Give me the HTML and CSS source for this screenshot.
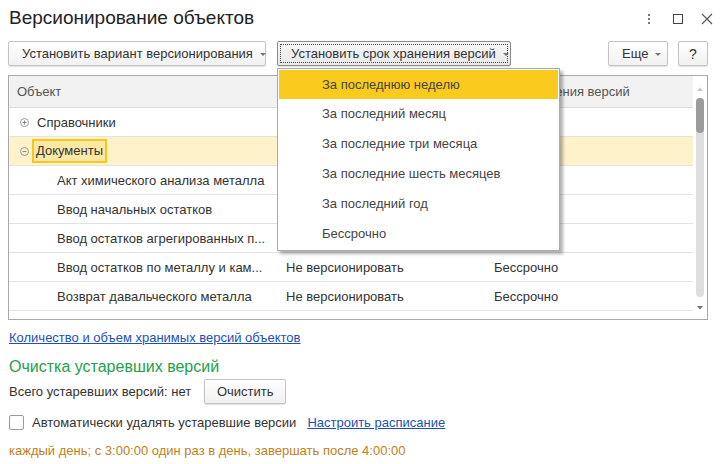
FILE: index.html
```html
<!DOCTYPE html>
<html lang="ru">
<head>
<meta charset="utf-8">
<title>Версионирование объектов</title>
<link rel="stylesheet" href="styles.css">
</head>
<body>
<div class="window">
  <header class="titlebar">
    <h1 class="title">Версионирование объектов</h1>
    <div class="wincontrols">
      <svg class="wc" width="12" height="12" viewBox="0 0 12 12"><g fill="#777"><rect x="5" y="1" width="2" height="2"/><rect x="5" y="5" width="2" height="2"/><rect x="5" y="9" width="2" height="2"/></g></svg>
      <svg class="wc" width="12" height="12" viewBox="0 0 12 12"><rect x="1.5" y="1.5" width="9" height="9" fill="none" stroke="#444" stroke-width="1"/></svg>
      <svg class="wc" width="12" height="12" viewBox="0 0 12 12"><path d="M1 1L11 11M11 1L1 11" stroke="#555" stroke-width="1.1"/></svg>
    </div>
  </header>

  <div class="toolbar">
    <button class="btn btn-wide">Установить вариант версионирования <span class="caret"></span></button>
    <button class="btn btn-active"><span class="focus">Установить срок хранения версий <span class="caret"></span></span></button>
    <div class="spacer"></div>
    <button class="btn btn-more">Еще <span class="caret"></span></button>
    <button class="btn btn-help">?</button>
  </div>

  <div class="grid-box">
    <div class="grid">
      <div class="row head">
        <div class="c1">Объект</div>
        <div class="c2"></div>
        <div class="c3">Срок хранения версий</div>
      </div>
      <div class="row">
        <div class="c1 tree"><svg class="node" width="9" height="9" viewBox="0 0 9 9"><circle cx="4.5" cy="4.5" r="4" fill="none" stroke="#999"/><path d="M2.5 4.5h4M4.5 2.5v4" stroke="#888"/></svg>Справочники</div>
        <div class="c2"></div>
        <div class="c3"></div>
      </div>
      <div class="row selected">
        <div class="c1 tree"><svg class="node" width="9" height="9" viewBox="0 0 9 9"><circle cx="4.5" cy="4.5" r="4" fill="none" stroke="#999"/><path d="M2.5 4.5h4" stroke="#888"/></svg><span class="cur">Документы</span></div>
        <div class="c2"></div>
        <div class="c3"></div>
      </div>
      <div class="row">
        <div class="c1 child">Акт химического анализа металла</div>
        <div class="c2"></div>
        <div class="c3"></div>
      </div>
      <div class="row">
        <div class="c1 child">Ввод начальных остатков</div>
        <div class="c2"></div>
        <div class="c3"></div>
      </div>
      <div class="row">
        <div class="c1 child">Ввод остатков агрегированных п...</div>
        <div class="c2"></div>
        <div class="c3"></div>
      </div>
      <div class="row">
        <div class="c1 child">Ввод остатков по металлу и кам...</div>
        <div class="c2">Не версионировать</div>
        <div class="c3">Бессрочно</div>
      </div>
      <div class="row">
        <div class="c1 child">Возврат давальческого металла</div>
        <div class="c2">Не версионировать</div>
        <div class="c3">Бессрочно</div>
      </div>
    </div>
    <div class="scrollbar">
      <svg width="8" height="6" viewBox="0 0 8 6"><path d="M1 5L4 1.5L7 5Z" fill="#c8c8c8"/></svg>
      <div class="track"><div class="thumb"></div></div>
      <svg width="8" height="6" viewBox="0 0 8 6"><path d="M1 1L4 4.5L7 1Z" fill="#777"/></svg>
    </div>
  </div>

  <section class="bottom">
    <a class="link" href="#">Количество и объем хранимых версий объектов</a>
    <h2 class="group">Очистка устаревших версий</h2>
    <div class="line">
      <span>Всего устаревших версий: нет</span>
      <button class="btn btn-clear">Очистить</button>
    </div>
    <div class="line check-line">
      <span class="checkbox"></span>
      <span>Автоматически удалять устаревшие версии</span>
      <a class="link" href="#">Настроить расписание</a>
    </div>
    <div class="schedule">каждый день; с 3:00:00 один раз в день, завершать после 4:00:00</div>
  </section>

  <ul class="menu">
    <li class="hot">За последнюю неделю</li>
    <li>За последний месяц</li>
    <li>За последние три месяца</li>
    <li>За последние шесть месяцев</li>
    <li>За последний год</li>
    <li>Бессрочно</li>
  </ul>
</div>
</body>
</html>
```

FILE: styles.css
```css
* { box-sizing: border-box; }
html, body { margin: 0; padding: 0; background: #fff; }
body {
  font-family: "Liberation Sans", Arial, sans-serif;
  font-size: 13px;
  color: #333;
}
.window {
  position: relative;
  width: 722px;
  height: 464px;
  overflow: hidden;
}
.titlebar {
  display: flex;
  align-items: center;
  height: 37px;
  padding: 0 9px 0 9px;
}
.title {
  margin: 0;
  font-weight: normal;
  font-size: 19px;
  color: #222;
  flex: 1;
  line-height: 22px;
  padding-bottom: 1px;
}
.wincontrols {
  display: flex;
  align-items: center;
  gap: 17px;
  margin-right: 0;
}
.wc { display: block; }

.toolbar {
  display: flex;
  align-items: center;
  padding: 4px 14px 0 8px;
  height: 29px;
}
.btn {
  font-family: inherit;
  font-size: 13px;
  color: #333;
  height: 25px;
  border: 1px solid #c3c3c3;
  border-radius: 2px;
  background: linear-gradient(#ffffff, #f1f1f1);
  box-shadow: 0 1px 1px rgba(0,0,0,0.12);
  padding: 0 8px 0 13px;
  display: inline-flex;
  align-items: center;
  white-space: nowrap;
  cursor: default;
}
.btn-wide { width: 258px; }
.btn-active {
  margin-left: 11px;
  width: 234px;
  padding: 2px;
  border-color: #8c8c8c;
  background: linear-gradient(#f6f6f6, #e9e9e9);
}
.focus {
  display: flex;
  align-items: center;
  width: 100%;
  height: 100%;
  border: 1px dotted #444;
  padding: 0 6px 0 10px;
}
.caret {
  display: inline-block;
  width: 0; height: 0;
  border-left: 3px solid transparent;
  border-right: 3px solid transparent;
  border-top: 3px solid #777;
  margin-left: 7px;
  margin-top: 1px;
}
.spacer { flex: 1; }
.btn-more { width: 60px; padding: 0 0 0 13px; }
.btn-help { width: 30px; margin-left: 10px; justify-content: center; padding: 0; font-size: 14px; }

.grid-box {
  display: flex;
  margin: 9px 14px 0 8px;
  height: 245px;
  border: 1px solid #a8a8a8;
}
.grid { flex: 1; overflow: hidden; }
.row {
  display: grid;
  grid-template-columns: 269px 208px 1fr;
  height: 29px;
  align-items: center;
  border-bottom: 1px solid #e3e3e3;
}
.row > div { white-space: nowrap; overflow: hidden; }
.row.head {
  height: 32px;
  background: #f2f2f2;
  color: #555;
  border-bottom: 1px solid #dcdcdc;
}
.head .c1 { padding-left: 8px; }
.c2, .c3 { padding-left: 8px; }
.tree { display: flex; align-items: center; padding-left: 11px; }
.node { margin-right: 8px; flex: none; }
.child { padding-left: 48px; }
.row.selected { background: #fdf2c9; }
.cur {
  display: inline-block;
  border: 2px solid #f6c71e;
  background: #fbe8a4;
  padding: 2px 2px 3px 2px;
  margin-left: -5px;
  line-height: 15px;
}
.scrollbar {
  width: 14px;
  display: flex;
  flex-direction: column;
  align-items: center;
  padding: 10px 0 8px;
}
.track {
  flex: 1;
  width: 8px;
  margin: 6px 0 8px;
  background: #dedede;
  border-radius: 4px;
  position: relative;
}
.thumb {
  height: 35px;
  background: #9c9c9c;
  border-radius: 4px;
}

.bottom {
  padding: 10px 9px 0 9px;
  display: flex;
  flex-direction: column;
  align-items: flex-start;
}
.link { color: #1d4fb6; text-decoration: underline; }
.group {
  margin: 12px 0 0 0;
  font-weight: normal;
  font-size: 16px;
  line-height: 20px;
  color: #23a14c;
}
.line {
  display: flex;
  align-items: center;
  margin-top: 2px;
}
.btn-clear { margin-left: 13px; width: 82px; justify-content: center; padding: 0; }
.check-line { margin-top: 11px; }
.checkbox {
  width: 15px; height: 15px;
  border: 1px solid #9a9a9a;
  border-radius: 2px;
  background: #fff;
  margin-right: 8px;
}
.check-line .link { margin-left: 11px; }
.schedule {
  margin-top: 13px;
  color: #c27f18;
}

.menu {
  position: absolute;
  left: 277px;
  top: 68px;
  width: 283px;
  margin: 0;
  padding: 1px;
  list-style: none;
  background: #fff;
  border: 1px solid #a9a9a9;
  box-shadow: 3px 3px 3px rgba(0,0,0,0.3);
}
.menu li {
  height: 30px;
  line-height: 30px;
  padding-left: 43px;
  color: #444;
}
.menu li.hot {
  background: #f9cb1e;
  height: 29px;
  line-height: 29px;
}
```
